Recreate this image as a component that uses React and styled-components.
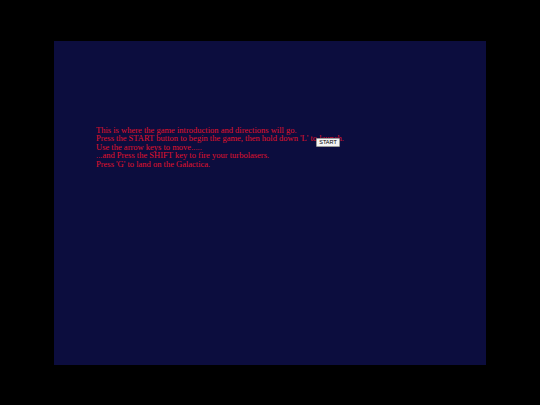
import React from 'react'
import styled, { createGlobalStyle } from 'styled-components'

const GlobalStyle = createGlobalStyle`
html, body {
    margin: 0;
    padding: 0;
    background: #000;
}
#root {
    width: 540px;
    height: 405px;
}
`

const Stage = styled.div`
width: 540px;
height: 405px;
display: flex;
align-items: center;
justify-content: center;
background: #000;
`

const Panel = styled.div`
position: relative;
width: 432px;
height: 324px;
background: #0c0d3e;
box-sizing: border-box;
padding: 85px 0 0 42px;
`

const Intro = styled.div`
font-family: "Liberation Serif", "Times New Roman", serif;
font-size: 8.5px;
line-height: 8.6px;
color: #e0112c;
p{
    margin: 0;
    white-space: nowrap;
}
`

const StartButton = styled.button`
position: absolute;
left: 262px;
top: 97px;
width: 24px;
height: 9px;
padding: 0;
border: 1px solid #999;
border-radius: 1px;
background: #f4f4f4;
color: #000;
font-family: "Liberation Sans", Arial, sans-serif;
font-size: 5.5px;
line-height: 7px;
cursor: pointer;
`

const lines = [
    'This is where the game introduction and directions will go.',
    "Press the START button to begin the game, then hold down 'L' to launch.",
    'Use the arrow keys to move.....',
    '...and Press the SHIFT key to fire your turbolasers.',
    "Press 'G' to land on the Galactica.",
]

function App() {
    return (
        <>
            <GlobalStyle />
            <Stage>
                <Panel>
                    <Intro>
                        {lines.map(line => (<p key={line}>{line}</p>))}
                    </Intro>
                    <StartButton>START</StartButton>
                </Panel>
            </Stage>
        </>
    )
}

export default App
